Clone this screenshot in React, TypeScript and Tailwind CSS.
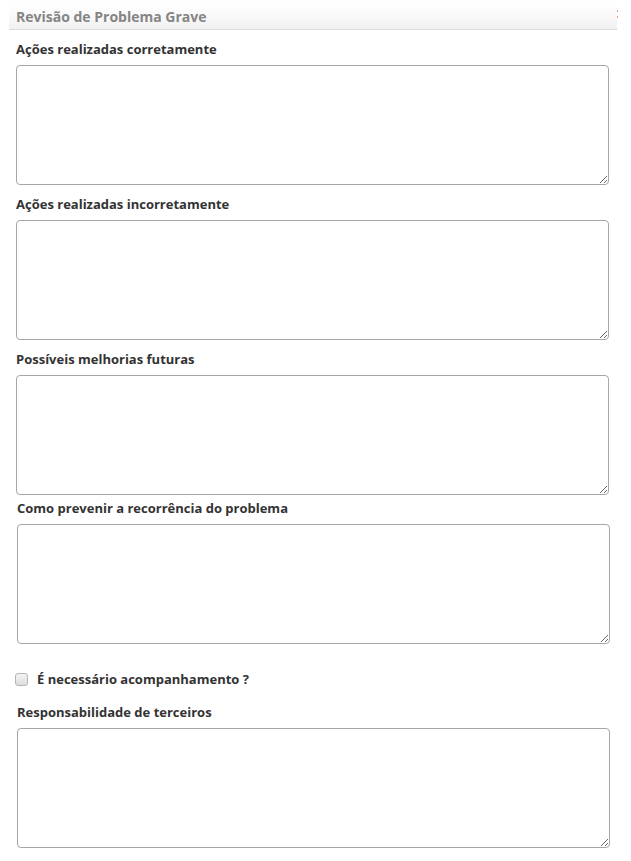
export default function App() {
  const font = { fontFamily: '"Open Sans", "Liberation Sans", sans-serif' }
  return (
    <div className="min-h-screen bg-white text-[#333]" style={font}>
      <div className="pt-[5px] pl-[9px] pr-[13px] flex">
        <div className="flex-1 h-[25px] flex items-center pl-[7px] bg-gradient-to-b from-white to-[#f1f1f1] border-b border-[#dcdcdc]">
          <span className="text-[14px] font-bold text-[#858585] leading-none">Revisão de Problema Grave</span>
        </div>
        <div className="w-[1px] flex flex-col gap-[4px] pt-[5px]">
          <span className="block w-[1px] h-[2px] bg-[#e8a070]" />
          <span className="block w-[1px] h-[2px] bg-[#e8a070]" />
        </div>
      </div>

      <div className="pl-[16px] pr-[22px] pt-[10px]">
        <Field label="Ações realizadas corretamente" />
        <div className="h-[10px]" />
        <Field label="Ações realizadas incorretamente" />
        <div className="h-[10px]" />
        <Field label="Possíveis melhorias futuras" />
      </div>

      <div className="pl-[17px] pr-[21px] pt-[4px]">
        <Field label="Como prevenir a recorrência do problema" />
        <label className="flex items-center gap-[9px] mt-[28px] h-[14px]">
          <input type="checkbox" className="w-[13px] h-[13px] -ml-[2px] appearance-none rounded-[3px] border border-[#b5b5b5] bg-gradient-to-b from-[#f4f4f4] to-[#dedede]" />
          <span className="text-[13px] font-bold leading-none">É necessário acompanhamento ?</span>
        </label>
        <div className="h-[17px]" />
        <Field label="Responsabilidade de terceiros" />
      </div>
    </div>
  )
}

function Field({ label }: { label: string }) {
  return (
    <div>
      <div className="h-[20px] flex items-center text-[13px] font-bold mb-[5px]">{label}</div>
      <textarea className="block w-full h-[120px] border border-[#a6a6a6] rounded-[4px] bg-white resize-y outline-none" />
    </div>
  )
}
